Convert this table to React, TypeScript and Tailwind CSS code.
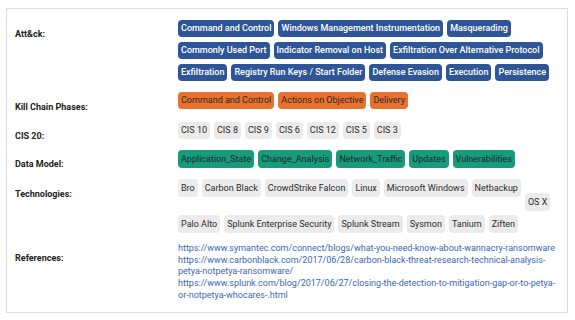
import type { ReactNode } from 'react';

type Tone = 'blue' | 'orange' | 'gray' | 'green';

const toneClasses: Record<Tone, string> = {
  blue: 'bg-[#2e5597] text-white font-medium',
  orange: 'bg-[#e9702f] text-[#2b2b2b]',
  gray: 'bg-[#ebebeb] text-[#2b2b2b]',
  green: 'bg-[#169b7b] text-[#1d2b27]',
};

function Tag({ tone, children, className = '' }: { tone: Tone; children: ReactNode; className?: string }) {
  return (
    <span
      className={`inline-block h-[17px] whitespace-nowrap rounded-[4px] px-[3px] text-[9px] leading-[17px] ${toneClasses[tone]} ${className}`}
    >
      {children}
    </span>
  );
}

// label box is kept short so it never pushes the row taller than its tags
function Row({ label, pad, children }: { label: string; pad: string; children: ReactNode }) {
  return (
    <>
      <div className={`h-[10px] whitespace-nowrap text-[9px] font-bold leading-[12px] text-[#222] ${pad}`}>{label}</div>
      <div>{children}</div>
    </>
  );
}

const attack = [
  'Command and Control',
  'Windows Management Instrumentation',
  'Masquerading',
  'Commonly Used Port',
  'Indicator Removal on Host',
  'Exfiltration Over Alternative Protocol',
  'Exfiltration',
  'Registry Run Keys / Start Folder',
  'Defense Evasion',
  'Execution',
  'Persistence',
];
const killChain = ['Command and Control', 'Actions on Objective', 'Delivery'];
const cis = ['CIS 10', 'CIS 8', 'CIS 9', 'CIS 6', 'CIS 12', 'CIS 5', 'CIS 3'];
const dataModel = ['Application_State', 'Change_Analysis', 'Network_Traffic', 'Updates', 'Vulnerabilities'];
const tech = [
  'Bro',
  'Carbon Black',
  'CrowdStrike Falcon',
  'Linux',
  'Microsoft Windows',
  'Netbackup',
  'OS X',
  'Palo Alto',
  'Splunk Enterprise Security',
  'Splunk Stream',
  'Sysmon',
  'Tanium',
  'Ziften',
];
const refLines = [
  'https://www.symantec.com/connect/blogs/what-you-need-know-about-wannacry-ransomware',
  'https://www.carbonblack.com/2017/06/28/carbon-black-threat-research-technical-analysis-',
  'petya-notpetya-ransomware/',
  'https://www.splunk.com/blog/2017/06/27/closing-the-detection-to-mitigation-gap-or-to-petya-',
  'or-notpetya-whocares-.html',
];

export default function App() {
  return (
    <div className="h-[320px] w-[575px] bg-white pl-[6px] pt-[8px] font-['Roboto',sans-serif]">
      <div className="h-[305px] w-[562px] border border-[#dcdcdc] pl-[8px] pr-[6px] pt-[11px]">
        <div className="grid grid-cols-[163px_1fr] gap-y-[11px]">
          <Row label="Att&ck:" pad="pt-[8px]">
            <div className="flex flex-wrap gap-x-[4px] gap-y-[5px]">
              {attack.map((t) => (
                <Tag key={t} tone="blue">{t}</Tag>
              ))}
            </div>
          </Row>
          <Row label="Kill Chain Phases:" pad="pt-[9px]">
            <div className="flex flex-wrap gap-x-[4px] gap-y-[5px]">
              {killChain.map((t) => (
                <Tag key={t} tone="orange">{t}</Tag>
              ))}
            </div>
          </Row>
          <Row label="CIS 20:" pad="pt-[10px]">
            <div className="mt-[2px] flex flex-wrap gap-x-[4px] gap-y-[5px]">
              {cis.map((t) => (
                <Tag key={t} tone="gray">{t}</Tag>
              ))}
            </div>
          </Row>
          <Row label="Data Model:" pad="pt-[8px]">
            <div className="flex flex-wrap gap-x-[4px] gap-y-[5px]">
              {dataModel.map((t) => (
                <Tag key={t} tone="green" className="h-[18px] leading-[18px]">{t}</Tag>
              ))}
            </div>
          </Row>
          <Row label="Technologies:" pad="pt-[9px]">
            <div className="flex flex-wrap items-start gap-x-[4px] gap-y-[4px]">
              {tech.map((t) => (
                <Tag key={t} tone="gray" className={`h-[18px] leading-[18px] ${t === 'OS X' ? 'mt-[14px]' : ''}`}>
                  {t}
                </Tag>
              ))}
            </div>
          </Row>
          <Row label="References:" pad="pt-[8px]">
            <div className="-mt-[1px] text-[9px] leading-[11.7px] text-[#3a68b0]">
              {refLines.map((l) => (
                <div key={l} className="whitespace-nowrap">{l}</div>
              ))}
            </div>
          </Row>
        </div>
      </div>
    </div>
  );
}
